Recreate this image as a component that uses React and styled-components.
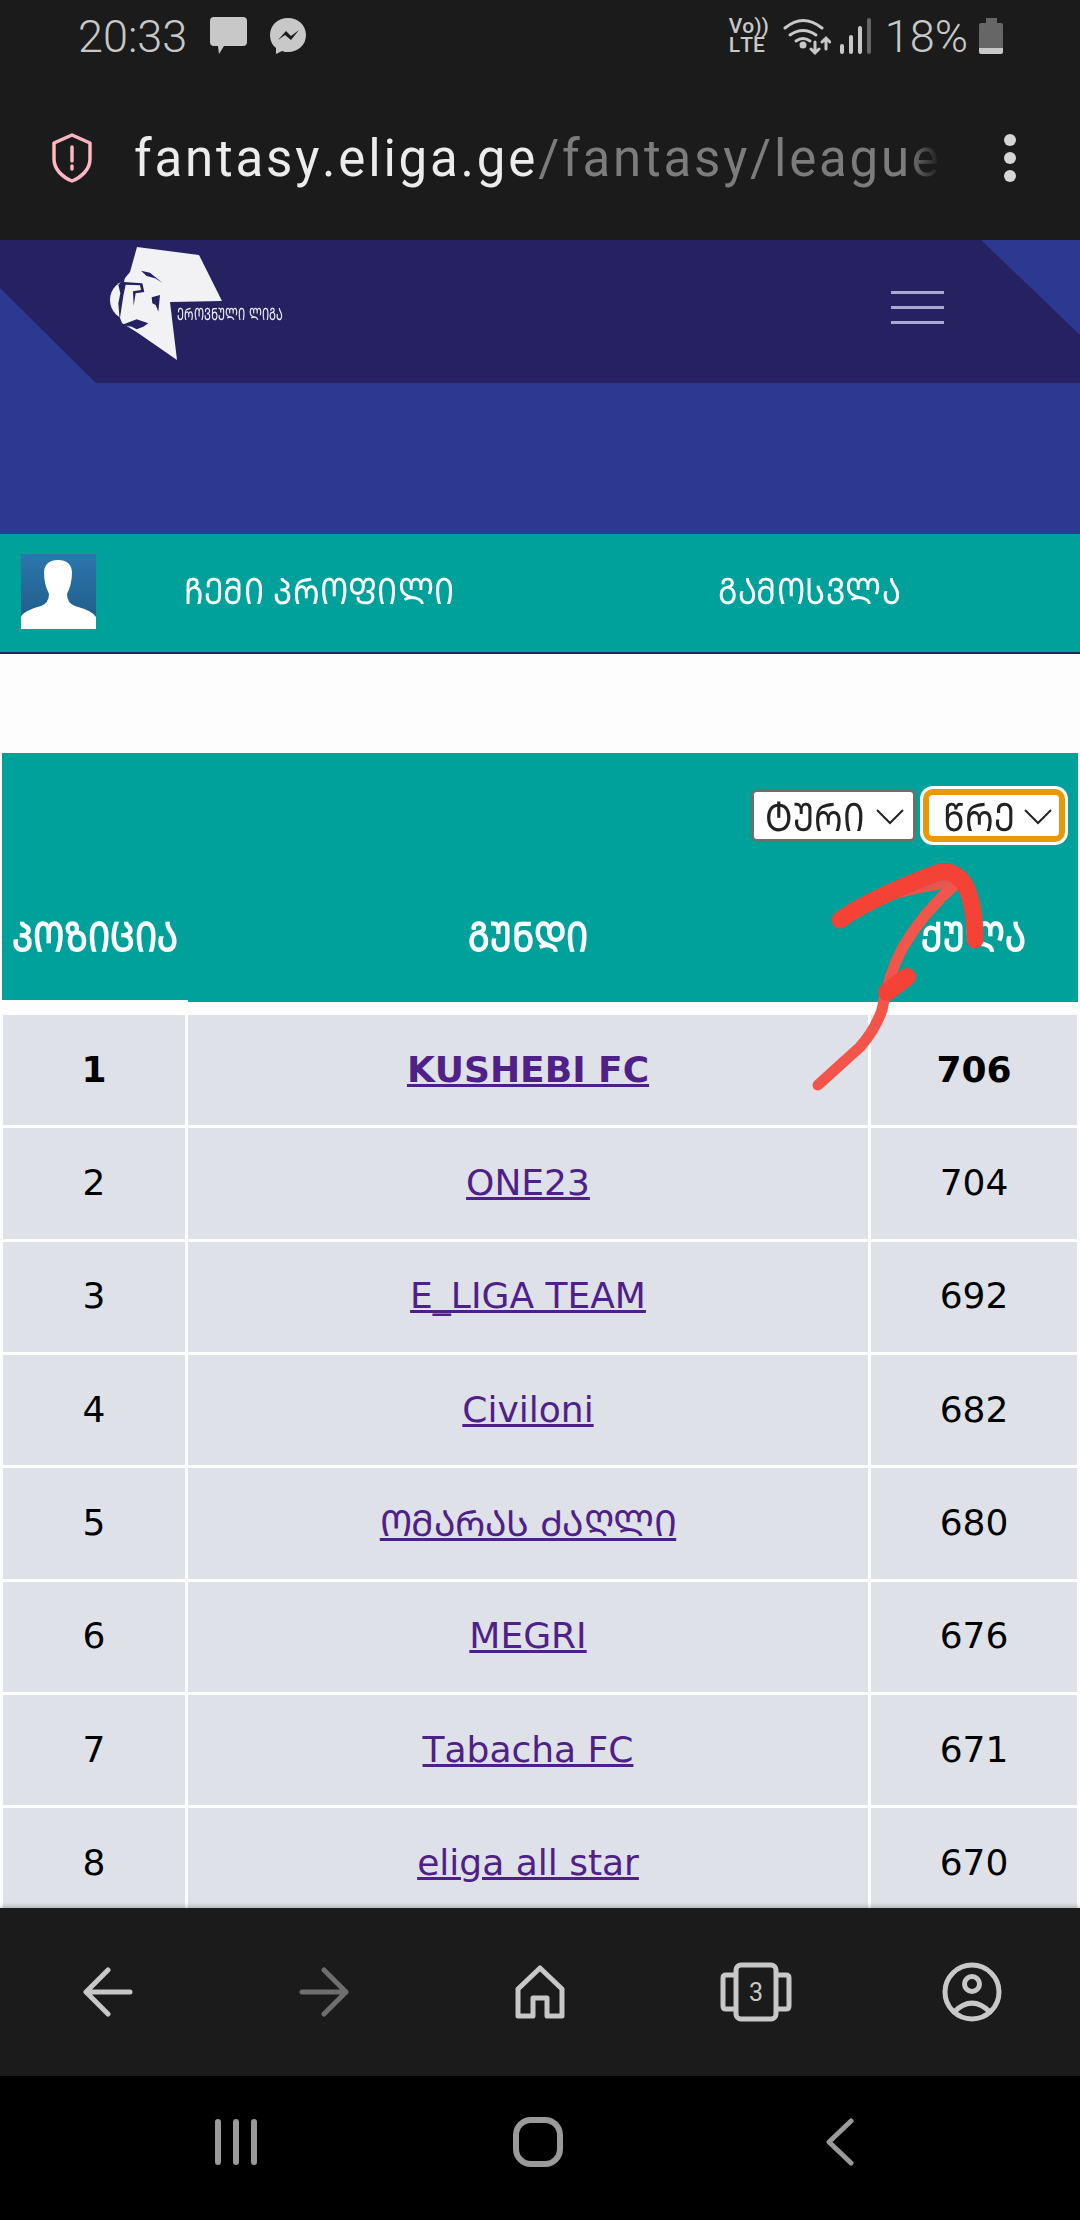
import React from "react";
import styled, { createGlobalStyle } from "styled-components";

const GlobalStyle = createGlobalStyle`
  html, body {
    margin: 0;
    padding: 0;
    background: #000;
  }
  * {
    box-sizing: border-box;
  }
`;

const Page = styled.div`
  position: relative;
  width: 1080px;
  height: 2220px;
  display: flex;
  flex-direction: column;
  overflow: hidden;
  font-family: "DejaVu Sans", sans-serif;
  font-kerning: none;
`;

/* phone chrome */
const StatusBar = styled.div`
  height: 70px;
  flex: none;
  background: #1b1b1b;
  color: #c8c8c8;
  display: flex;
  align-items: center;
  padding: 2px 77px 0 78px;
  font-family: Roboto, sans-serif;
  font-weight: 300;
  font-size: 45px;
`;

const StatusLeft = styled.div`
  display: flex;
  align-items: center;
  gap: 23px;
  flex: 1;
`;

const StatusRight = styled.div`
  display: flex;
  align-items: center;
`;

const Volte = styled.div`
  font-family: Roboto, sans-serif;
  font-weight: 500;
  font-size: 21px;
  line-height: 19px;
  width: 54px;
`;

const Percent = styled.span`
  margin: 0 11px 0 12px;
`;

const UrlBar = styled.div`
  height: 170px;
  flex: none;
  background: #1b1b1b;
  display: flex;
  align-items: center;
  padding: 6px 0 0 51px;
`;

const Url = styled.div`
  width: 806px;
  margin-left: 41px;
  white-space: nowrap;
  overflow: hidden;
  font-family: Roboto, sans-serif;
  font-size: 51px;
  letter-spacing: 2.8px;
  color: #ececec;
  -webkit-mask-image: linear-gradient(to right, #000 96%, transparent 100%);
  mask-image: linear-gradient(to right, #000 96%, transparent 100%);
  span {
    color: #7c7c7c;
  }
`;

const Dots = styled.div`
  margin-left: 64px;
  display: flex;
  flex-direction: column;
  gap: 6px;
  i {
    width: 12px;
    height: 12px;
    border-radius: 50%;
    background: #d6d6d6;
  }
`;

/* site header */
const SiteHeader = styled.header`
  height: 294px;
  flex: none;
  background: #2b3990;
`;

const HeaderBand = styled.div`
  height: 143px;
  background: #262262;
  clip-path: polygon(0 48px, 96px 143px, 100% 143px, 100% 95px, 981px 0, 0 0);
  display: flex;
  justify-content: space-between;
  padding-left: 80px;
  padding-right: 136px;
`;

const Logo = styled.div`
  position: relative;
  width: 240px;
  height: 143px;
`;

const LogoText = styled.span`
  position: absolute;
  left: 97px;
  top: 66px;
  font-size: 11.3px;
  transform: scaleY(1.5);
  color: #f2f2f4;
  white-space: nowrap;
`;

const Burger = styled.div`
  width: 53px;
  margin-top: 51px;
  display: flex;
  flex-direction: column;
  gap: 12px;
  i {
    height: 3px;
    background: #a9a9cf;
  }
`;

const ProfileBar = styled.nav`
  height: 120px;
  flex: none;
  background: #00a19a;
  border-bottom: 2px solid #1b2a5e;
  display: flex;
  align-items: center;
  padding: 0 0 6px 21px;
`;

const Avatar = styled.div`
  width: 75px;
  height: 75px;
  margin-top: 2px;
  background: linear-gradient(#2c76ad, #1f5a86);
  svg {
    display: block;
  }
`;

const NavLink = styled.a`
  margin-left: ${(p) => p.$gap}px;
  font-size: 34px;
  font-stretch: condensed;
  transform: scale(0.93, 1.07);
  transform-origin: left center;
  color: #fff;
`;

/* standings table */
const Content = styled.main`
  flex: 1;
  min-height: 0;
  overflow: hidden;
  background: #fdfdfd;
  padding-top: 99px;
`;

const TableHead = styled.div`
  position: relative;
  margin: 0 2px;
  height: 249px;
  background: #00a19a;
  display: flex;
  flex-direction: column;
`;

const Filters = styled.div`
  display: flex;
  justify-content: flex-end;
  align-items: center;
  gap: 7px;
  padding: 36px 10px 0 0;
`;

const Select = styled.div`
  height: 53px;
  width: ${(p) => (p.$focus ? 142 : 165)}px;
  display: flex;
  align-items: center;
  justify-content: space-between;
  padding: 0 ${(p) => (p.$focus ? 5 : 7)}px 0 ${(p) => (p.$focus ? 14 : 11)}px;
  background: #fff;
  color: #222;
  border-radius: ${(p) => (p.$focus ? 10 : 6)}px;
  border: ${(p) => (p.$focus ? "6px solid #e69a0a" : "3px solid #6e6e6e")};
  box-shadow: ${(p) => (p.$focus ? "0 0 0 3px #fff" : "none")};
  margin-right: ${(p) => (p.$focus ? 3 : 0)}px;
`;

const SelectLabel = styled.span`
  font-size: 34px;
  transform: scaleY(1.15);
`;

const HeadRow = styled.div`
  display: grid;
  grid-template-columns: 186px 680px 1fr;
  margin-top: 70px;
  text-align: center;
  color: #fff;
  font-weight: 700;
  font-size: 35px;
  font-stretch: condensed;
`;

const HeadCell = styled.div`
  transform: scaleY(1.15);
`;

const ActiveMark = styled.div`
  position: absolute;
  left: 0;
  bottom: 0;
  width: 186px;
  height: 2px;
  background: #fdfdfd;
`;

const Rows = styled.div`
  margin-top: 13px;
  display: grid;
  gap: 3px;
`;

const Row = styled.div`
  display: grid;
  grid-template-columns: 182px 680px 206px;
  column-gap: 3px;
  padding-left: 3px;
  font-size: 36px;
  font-weight: ${(p) => (p.$leader ? 700 : 400)};
  color: #000;
`;

const Cell = styled.div`
  height: 110.33px;
  padding-bottom: 2px;
  background: #dee2e8;
  display: flex;
  align-items: center;
  justify-content: center;
`;

const TeamLink = styled.a`
  color: #4f2088;
  text-decoration: underline;
  text-decoration-thickness: 3px;
  letter-spacing: ${(p) => (p.$tight ? -0.5 : 0)}px;
`;

/* bottom bars */
const BrowserNav = styled.div`
  position: relative;
  height: 168px;
  flex: none;
  background: #1b1b1b;
  box-shadow: 0 -2px 4px rgba(0, 0, 0, 0.2);
  display: grid;
  grid-template-columns: repeat(5, 216px);
  align-items: center;
  justify-items: center;
  color: #c8c8c8;
`;

const TabsIcon = styled.div`
  position: relative;
  width: 72px;
  height: 60px;
  svg {
    display: block;
  }
  span {
    position: absolute;
    inset: 0;
    display: flex;
    align-items: center;
    justify-content: center;
    font-family: Roboto, sans-serif;
    font-size: 25px;
  }
`;

const SystemNav = styled.div`
  height: 144px;
  flex: none;
  background: #000;
  display: flex;
  align-items: center;
  padding: 0 0 12px 85px;
  color: #9a9a9a;
  > div {
    width: 302px;
    display: flex;
    justify-content: center;
  }
`;

const ArrowOverlay = styled.svg`
  position: absolute;
  top: 0;
  left: 0;
  pointer-events: none;
`;

const teams = [
  ["1", "KUSHEBI FC", "706"],
  ["2", "ONE23", "704"],
  ["3", "E_LIGA TEAM", "692"],
  ["4", "Civiloni", "682"],
  ["5", "ᲝᲛᲐᲠᲐᲡ ᲫᲐᲦᲚᲘ", "680", true],
  ["6", "MEGRI", "676"],
  ["7", "Tabacha FC", "671"],
  ["8", "eliga all star", "670"],
];

const Chevron = () => (
  <svg width="32" height="20" viewBox="0 0 32 20" fill="none" stroke="#222" strokeWidth="2">
    <path d="M3 4l13 13L29 4" />
  </svg>
);

const LogoMark = () => (
  <svg width="240" height="143" viewBox="0 0 240 143" style={{ display: "block" }}>
    <path d="M57 7L119 15L142 61L90 62L97 120L58 93L42 83L31 55L50 32Z" fill="#f2f2f4" />
    <circle cx="50" cy="60" r="20" fill="#f2f2f4" />
    <g transform="translate(25 30) scale(0.3333)" fill="#262262">
      <path d="M108 2L135 8L172 38L150 25L125 18Z" />
      <path d="M40 45L60 22L57 36L112 40L118 66L92 70L86 108L84 64L108 60L105 46L62 44L55 78L44 150L40 100L46 70Z" />
      <path d="M140 82L165 75L160 125L152 105L142 100Z" />
      <path d="M50 165L95 148L130 160L115 170L95 178L80 170Z" />
    </g>
  </svg>
);

const App = () => (
  <Page>
    <GlobalStyle />
    <StatusBar>
      <StatusLeft>
        <span>20:33</span>
        <svg width="37" height="38" viewBox="0 0 37 38" fill="#c8c8c8">
          <path d="M4 0H33Q37 0 37 4V25Q37 29 33 29H14L9 37L8 29H4Q0 29 0 25V4Q0 0 4 0Z" />
        </svg>
        <svg width="36" height="36" viewBox="0 0 36 36">
          <path d="M18 0C8 0 0 7 0 17C0 22 2 27 6 30V36L12 33C14 34 16 34 18 34C28 34 36 27 36 17C36 7 28 0 18 0Z" fill="#c8c8c8" />
          <path d="M8 22L16 13L21 18L29 12L21 22L15 17Z" fill="#1b1b1b" />
        </svg>
      </StatusLeft>
      <StatusRight>
        <Volte>
          Vo))
          <br />
          LTE
        </Volte>
        <svg width="48" height="40" viewBox="0 0 48 40" fill="none" stroke="#c8c8c8" strokeWidth="3" strokeLinecap="round">
          <path d="M2 12Q20 -3 39 12" />
          <path d="M7 19Q20 10 33 19" />
          <path d="M13 25Q20 20 27 25" />
          <circle cx="20" cy="29" r="2" fill="#c8c8c8" />
          <path d="M32 26V37M28 33l4 4 4-4M43 33V22M39 26l4-4 4 4" />
        </svg>
        <svg width="34" height="36" viewBox="0 0 34 36" fill="none" strokeWidth="4" strokeLinecap="round" style={{ marginLeft: 8 }}>
          <path d="M3 28V34M12 19V34M21 10V34" stroke="#c8c8c8" />
          <path d="M30 2V34" stroke="#666" />
        </svg>
        <Percent>18%</Percent>
        <svg width="24" height="36" viewBox="0 0 24 36">
          <path d="M7 0H18V5H22Q24 5 24 7V30H0V7Q0 5 2 5H7Z" fill="#666" />
          <path d="M0 30H24V34Q24 36 22 36H2Q0 36 0 34Z" fill="#c8c8c8" />
        </svg>
      </StatusRight>
    </StatusBar>
    <UrlBar>
      <svg width="42" height="50" viewBox="0 0 42 50" fill="none" stroke="#ffb6c1" strokeWidth="3.5" strokeLinejoin="round">
        <path d="M21 2L39 10V26C39 36 31 44 21 48C11 44 3 36 3 26V10Z" />
        <path d="M21 14V28M21 33V36" strokeLinecap="round" />
      </svg>
      <Url>
        fantasy.eliga.ge<span>/fantasy/leagues</span>
      </Url>
      <Dots>
        <i />
        <i />
        <i />
      </Dots>
    </UrlBar>
    <SiteHeader>
      <HeaderBand>
        <Logo>
          <LogoMark />
          <LogoText>ᲔᲠᲝᲕᲜᲣᲚᲘ ᲚᲘᲒᲐ</LogoText>
        </Logo>
        <Burger>
          <i />
          <i />
          <i />
        </Burger>
      </HeaderBand>
    </SiteHeader>
    <ProfileBar>
      <Avatar>
        <svg width="75" height="75" viewBox="0 0 75 75" fill="#fff">
          <path d="M0 75V63Q2 57 20 52Q28 49 28 40Q23 30 23 18Q24 6 37 6Q50 6 51 18Q51 30 46 40Q46 49 54 52Q72 57 75 63V75Z" />
        </svg>
      </Avatar>
      <NavLink $gap={88}>ᲩᲔᲛᲘ ᲞᲠᲝᲤᲘᲚᲘ</NavLink>
      <NavLink $gap={243}>ᲒᲐᲛᲝᲡᲕᲚᲐ</NavLink>
    </ProfileBar>
    <Content>
      <TableHead>
        <Filters>
          <Select>
            <SelectLabel>ᲢᲣᲠᲘ</SelectLabel> <Chevron />
          </Select>
          <Select $focus>
            <SelectLabel>ᲬᲠᲔ</SelectLabel> <Chevron />
          </Select>
        </Filters>
        <HeadRow>
          <HeadCell>ᲞᲝᲖᲘᲪᲘᲐ</HeadCell>
          <HeadCell>ᲒᲣᲜᲓᲘ</HeadCell>
          <HeadCell>ᲥᲣᲚᲐ</HeadCell>
        </HeadRow>
        <ActiveMark />
      </TableHead>
      <Rows>
        {teams.map(([pos, name, pts, tight]) => (
          <Row key={pos} $leader={pos === "1"}>
            <Cell>{pos}</Cell>
            <Cell>
              <TeamLink $tight={tight}>{name}</TeamLink>
            </Cell>
            <Cell>{pts}</Cell>
          </Row>
        ))}
      </Rows>
    </Content>
    <BrowserNav>
      <svg width="50" height="50" viewBox="0 0 50 50" fill="none" stroke="currentColor" strokeWidth="5" strokeLinecap="round" strokeLinejoin="round">
        <path d="M25 3L3 25L25 47M3 25H47" />
      </svg>
      <svg width="50" height="50" viewBox="0 0 50 50" fill="none" stroke="#6e6e6e" strokeWidth="5" strokeLinecap="round" strokeLinejoin="round">
        <path d="M25 3L47 25L25 47M47 25H3" />
      </svg>
      <svg width="50" height="54" viewBox="0 0 50 54" fill="none" stroke="currentColor" strokeWidth="5" strokeLinejoin="round">
        <path d="M3 24L25 3L47 24V51H32V33H18V51H3Z" />
      </svg>
      <TabsIcon>
        <svg width="72" height="60" viewBox="0 0 72 60" fill="none" stroke="currentColor" strokeWidth="5" strokeLinejoin="round">
          <rect x="16" y="3" width="40" height="54" rx="5" />
          <path d="M16 13H6Q3 13 3 16V44Q3 47 6 47H16M56 13H66Q69 13 69 16V44Q69 47 66 47H56" />
        </svg>
        <span>3</span>
      </TabsIcon>
      <svg width="60" height="60" viewBox="0 0 60 60" fill="none" stroke="currentColor" strokeWidth="5" strokeLinecap="round">
        <circle cx="30" cy="30" r="27" />
        <circle cx="30" cy="22" r="7.5" />
        <path d="M12 50Q30 32 48 50" />
      </svg>
    </BrowserNav>
    <SystemNav>
      <div>
        <svg width="44" height="46" viewBox="0 0 44 46" fill="none" stroke="currentColor" strokeWidth="6" strokeLinecap="round">
          <path d="M4 3V43M22 3V43M40 3V43" />
        </svg>
      </div>
      <div>
        <svg width="50" height="50" viewBox="0 0 50 50" fill="none" stroke="currentColor" strokeWidth="6">
          <rect x="3" y="3" width="44" height="44" rx="15" />
        </svg>
      </div>
      <div>
        <svg width="28" height="48" viewBox="0 0 28 48" fill="none" stroke="currentColor" strokeWidth="5" strokeLinecap="round" strokeLinejoin="round">
          <path d="M25 3L3 24L25 45" />
        </svg>
      </div>
    </SystemNav>
    <ArrowOverlay width="1080" height="2220" viewBox="0 0 1080 2220" fill="none" strokeLinecap="round" strokeLinejoin="round">
      <path d="M857 907Q900 890 955 883" stroke="#e2584e" strokeWidth="9" />
      <path d="M818 1085L860 1047Q875 1030 882 1010Q888 975 903 947Q925 910 957 883" stroke="#f3554b" strokeWidth="11" />
      <path d="M887 992L907 977" stroke="#f44336" strokeWidth="18" />
      <path d="M840 920Q860 905 907 885Q925 877 940 872Q955 870 965 885Q975 905 975 940" stroke="#f44336" strokeWidth="17" />
    </ArrowOverlay>
  </Page>
);

export default App;
